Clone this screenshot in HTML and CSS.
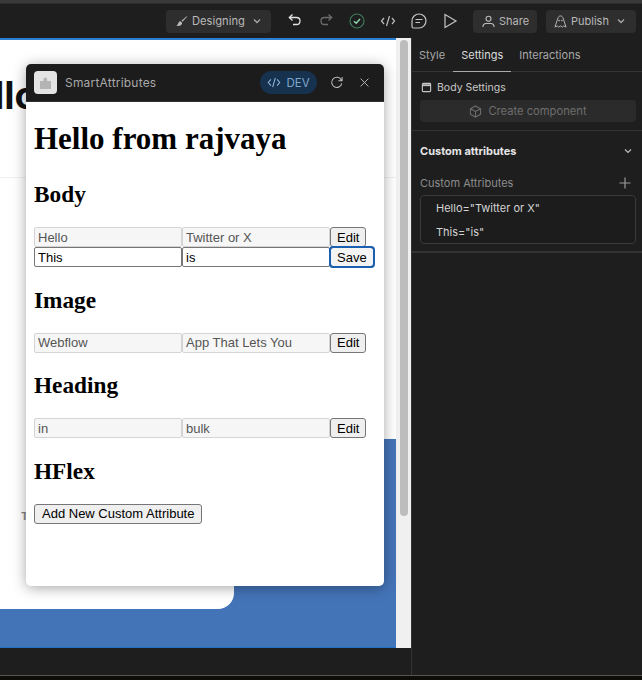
FILE: index.html
```html
<!DOCTYPE html>
<html lang="en">
<head>
<meta charset="utf-8">
<title>SmartAttributes</title>
<link rel="stylesheet" href="styles.css">
</head>
<body>
<div class="app">
  <div class="strip-top"></div>
  <header class="topbar">
    <div class="tb-btn designing">
      <svg class="ic14" viewBox="0 0 14 14" fill="#bdbdbd"><path d="M13 1.200 7 6.200l1 1.200 5-5.600zM5.900 6.800c-1.500.2-2 1.100-2.300 2.200-.3 1-1 1.800-2.200 2.400 2.400.7 4.900.4 6-1.600.3-.6.300-1.100.1-1.500z"/></svg>
      <span>Designing</span>
      <svg class="chev" viewBox="0 0 10 6" fill="none" stroke="#aaa" stroke-width="1.300"><path d="M2 1.500 5 4.500l3-3"/></svg>
    </div>
    <div class="tools">
      <svg class="ic16" viewBox="0 0 16 16" fill="none" stroke="#e2e2e2" stroke-width="1.300"><path d="M5.500 1.500 2.300 4.500l3.200 3M2.500 4.500h7c2 0 3.500 1.400 3.500 3.400s-1.500 3.600-3.500 3.600H6"/></svg>
      <svg class="ic16" viewBox="0 0 16 16" fill="none" stroke="#6c6c6c" stroke-width="1.300"><path d="M10.500 1.500l3.200 3-3.200 3M13.500 4.500h-7c-2 0-3.500 1.400-3.500 3.400s1.500 3.600 3.500 3.600H10"/></svg>
      <svg class="ic16" viewBox="0 0 16 16" fill="none"><circle cx="8" cy="8" r="7" stroke="#3e7a5c" stroke-width="1.200"/><path d="M5 8.200 7.200 10.200 11 6" stroke="#8fdcae" stroke-width="1.400"/></svg>
      <svg class="ic16" viewBox="0 0 16 16" fill="none" stroke="#bcbcbc" stroke-width="1.200"><path d="M4 5 1.500 8 4 11M12 5l2.500 3L12 11M9.500 3 6.500 13"/></svg>
      <svg class="ic16" viewBox="0 0 16 16" fill="none" stroke="#c4c4c4" stroke-width="1.200"><path d="M8 1c3.900 0 7 3 7 6.800S11.900 15 8 15H2.500c-.8 0-1.500-.6-1.500-1.400V8C1 4 4.100 1 8 1z"/><path d="M4.500 6.500h7M4.500 9.500h4.500"/></svg>
      <svg class="ic16" viewBox="0 0 16 16" fill="none" stroke="#c4c4c4" stroke-width="1.200"><path d="M3 1.500v13L14 8z"/></svg>
    </div>
    <div class="tb-btn share">
      <svg class="ic14" viewBox="0 0 14 14" fill="none" stroke="#bdbdbd" stroke-width="1.200"><circle cx="7" cy="4" r="2.700"/><path d="M1 13c0-2.500 1.500-3.800 3.500-3.800h5c2 0 3.500 1.300 3.500 3.800"/></svg>
      <span>Share</span>
    </div>
    <div class="tb-btn publish">
      <svg class="ic14" viewBox="0 0 14 14" fill="none" stroke="#bdbdbd" stroke-width="1"><path d="M1 13 4 4c.6-2 1.700-3 3-3s2.400 1 3 3l3 9-2.500-1.200L9 13l-2-1.200L5 13l-1.500-1.200z"/><circle cx="5.500" cy="6" r=".5"/><circle cx="8.500" cy="6" r=".5"/></svg>
      <span>Publish</span>
      <svg class="chev" viewBox="0 0 10 6" fill="none" stroke="#aaa" stroke-width="1.300"><path d="M2 1.500 5 4.500l3-3"/></svg>
    </div>
  </header>
  <div class="main">
    <div class="left">
      <div class="canvas">
        <div class="page">
          <div class="hero"><div class="hero-title">Hello</div></div>
          <div class="hero-rest"></div>
          <div class="blue">
            <div class="card"><span class="card-t">T</span></div>
          </div>
        </div>
        <div class="scrolltrack"><div class="thumb"></div></div>
        <section class="popup">
          <div class="pop-head">
            <div class="pop-logo">
              <svg viewBox="0 0 14 14" fill="#b4b4b4"><path d="M1 5h3.500V3.200a1.800 1.800 0 0 1 3.600 0V5H12v8H1z"/></svg>
            </div>
            <span class="pop-name">SmartAttributes</span>
            <div class="dev">
              <svg viewBox="0 0 16 12" fill="none" stroke="#8fb8de" stroke-width="1.200"><path d="M4.500 2.500 1.500 6l3 3.500M11.500 2.500l3 3.500-3 3.500M9.500 .8 6.500 11.200"/></svg>
              <span>DEV</span>
            </div>
            <svg class="pop-ic" viewBox="0 0 14 14" fill="none" stroke="#bdbdbd" stroke-width="1.100"><path d="M12.300 4.500A5.500 5.500 0 1 0 12.700 8M13 1v4H9"/></svg>
            <svg class="pop-x" viewBox="0 0 14 14" fill="none" stroke="#bdbdbd" stroke-width="1.200"><path d="M2 2l10 10M12 2 2 12"/></svg>
          </div>
          <div class="pop-body">
            <h1>Hello from rajvaya</h1>
            <h2>Body</h2>
            <div class="row">
              <input class="inp" disabled value="Hello"><input class="inp" disabled value="Twitter or X"><button class="btn">Edit</button>
            </div>
            <div class="row">
              <input class="inp active" value="This"><input class="inp active" value="is"><button class="btn save">Save</button>
            </div>
            <h2>Image</h2>
            <div class="row">
              <input class="inp" disabled value="Webflow"><input class="inp" disabled value="App That Lets You"><button class="btn">Edit</button>
            </div>
            <h2>Heading</h2>
            <div class="row">
              <input class="inp" disabled value="in"><input class="inp" disabled value="bulk"><button class="btn">Edit</button>
            </div>
            <h2>HFlex</h2>
            <button class="btn add">Add New Custom Attribute</button>
          </div>
        </section>
      </div>
      <div class="bottombar"></div>
    </div>
    <aside class="panel">
      <nav class="tabs">
        <span class="tab first">Style</span>
        <span class="tab on">Settings</span>
        <span class="tab">Interactions</span>
      </nav>
      <div class="sec-body">
        <div class="body-set">
          <svg viewBox="0 0 12 12" fill="none" stroke="#c8c8c8" stroke-width="1.200"><rect x="1.500" y="1.500" width="9" height="9" rx="1"/><path d="M1.500 3.500h9" stroke-width="2"/></svg>
          <span>Body Settings</span>
        </div>
        <div class="create">
          <svg viewBox="0 0 14 14" fill="none" stroke="#6e6e6e" stroke-width="1.100"><path d="M7 1 12.500 4v6L7 13 1.500 10V4zM1.500 4 7 7l5.500-3M7 7v6"/></svg>
          <span>Create component</span>
        </div>
      </div>
      <div class="sec-attr">
        <div class="attr-head">
          <b>Custom attributes</b>
          <svg viewBox="0 0 10 6" fill="none" stroke="#bbb" stroke-width="1.200"><path d="M2 1.500 5 4.500l3-3"/></svg>
        </div>
        <div class="attr-label">
          <span>Custom Attributes</span>
          <svg viewBox="0 0 12 12" fill="none" stroke="#9a9a9a" stroke-width="1.200"><path d="M6 .5v11M.5 6h11"/></svg>
        </div>
        <div class="attr-box">
          <div>Hello="Twitter or X"</div>
          <div>This="is"</div>
        </div>
      </div>
    </aside>
  </div>
  <div class="strip-bottom"></div>
</div>
</body>
</html>
```
FILE: styles.css
```css
* { box-sizing: border-box; }
html, body { margin: 0; height: 100%; }
body { background: #1e1e1e; font-family: Inter, "Liberation Sans", sans-serif; overflow: hidden; }
.app { width: 642px; height: 680px; display: flex; flex-direction: column; }
.strip-top { height: 4px; flex: none; background: #3a3a3a; border-bottom: 1px solid #2b2b2b; }
.topbar { height: 34px; flex: none; display: flex; align-items: center; background: #1e1e1e; padding: 0 6px 0 166px; }
.tb-btn { height: 23px; display: flex; align-items: center; background: #2e2e2e; border-radius: 4px; color: #b8b8b8; font-size: 11px; gap: 4px; }
.designing { width: 105px; padding-left: 9px; font-size: 11.200px; }
.share { width: 64px; margin-left: 15px; padding-left: 9px; }
.publish { width: 90px; margin-left: 9px; padding-left: 8px; }
.chev { width: 10px; height: 6px; margin-left: 3px; }
.ic14 { width: 13px; height: 13px; flex: none; }
.ic16 { width: 16px; height: 16px; flex: none; }
.tools { display: flex; gap: 15px; margin-left: 16px; }
.main { flex: 1; display: flex; min-height: 0; }
.left { width: 411px; flex: none; display: flex; flex-direction: column; }
.canvas { position: relative; height: 610px; display: flex; background: #f2f2f2; overflow: hidden; }
.page { width: 396px; flex: none; display: flex; flex-direction: column; border-top: 2px solid #2a7fd0; border-bottom: 1px solid #2272c8; background: #fff; }
.hero { height: 138px; flex: none; border-bottom: 1px solid #f0f0f0; overflow: hidden; }
.hero-title { margin: 32px 0 0 -57px; font-size: 38px; line-height: 46px; font-weight: 700; color: #111; }
.hero-rest { height: 261px; flex: none; background: #fff; }
.blue { flex: 1; background: #4474b8; }
.card { width: 234px; height: 170px; background: #fff; border-radius: 0 0 16px 0; padding: 65px 0 0 21px; }
.card-t { font-size: 11px; font-weight: 700; color: #888; }
.scrolltrack { width: 15px; flex: none; padding: 2px 3px 0 4px; background: #f0f0f0; }
.thumb { height: 476px; border-radius: 4px; background: #bdbdbd; }
.bottombar { flex: 1; background: #1e1e1e; }
.popup { position: absolute; left: 26px; top: 26px; width: 358px; height: 522px; background: #fff; border-radius: 5px; box-shadow: 0 2px 14px rgba(0,0,0,.35); overflow: hidden; }
.pop-head { height: 38px; display: flex; align-items: center; background: #1c1c1c; padding-left: 8px; border-bottom: 1px solid #333; }
.pop-logo { width: 23px; height: 23px; display: flex; align-items: center; justify-content: center; background: #e4e4e4; border-radius: 4px; }
.pop-logo svg { width: 14px; height: 14px; }
.pop-name { margin-left: 8px; font-size: 12px; color: #a9a9a9; letter-spacing: .2px; }
.dev { width: 57px; height: 23px; margin-left: auto; display: flex; align-items: center; justify-content: center; gap: 5px; background: #16324f; border-radius: 12px; color: #7ea6cc; font-size: 11.500px; }
.dev svg { width: 14px; height: 11px; }
.pop-ic { width: 13px; height: 13px; margin-left: 13px; }
.pop-x { width: 11px; height: 11px; margin: 0 14px 0 16px; }
.pop-body { padding: 0 8px; color: #000; font-family: "Liberation Serif", serif; }
h1 { margin: 19px 0 24px; font-size: 31px; line-height: 36px; font-weight: 700; }
h2 { margin: 19.500px 0; font-size: 23.300px; line-height: 26.500px; font-weight: 700; }
.row { display: flex; height: 20px; }
.inp { width: 148px; height: 20px; padding: 1px 3px; font: 13px "Liberation Sans", Arial, sans-serif; color: #555; background: #f6f6f6; border: 1px solid #d4d4d4; border-radius: 2px; opacity: 1; -webkit-text-fill-color: #555; }
.active { color: #000; -webkit-text-fill-color: #000; background: #fff; border-color: #767676; }
.btn { height: 20px; padding: 0 6px; font: 13px "Liberation Sans", Arial, sans-serif; color: #000; background: #efefef; border: 1px solid #767676; border-radius: 3px; }
.save { background: #f4f4f4; outline: 2px solid #1a5fb0; outline-offset: -1px; }
.add { display: block; padding: 0 7px; }
.panel { flex: 1; min-width: 0; background: #1e1e1e; border-left: 1px solid #333; }
.tabs { height: 34px; display: flex; border-bottom: 1px solid #333; color: #a8a8a8; font-size: 11px; }
.tab { padding: 1px 8px 0; line-height: 33px; }
.first { margin-left: -1px; }
.tab.on { color: #dcdcdc; border-bottom: 1px solid #aaa; height: 34px; }
.sec-body { height: 59px; padding: 7px 6px 0 8px; border-bottom: 1px solid #333; }
.body-set { height: 16px; display: flex; align-items: center; gap: 5px; color: #c8c8c8; font-size: 10.500px; padding-left: 1px; }
.body-set svg { width: 11px; height: 11px; }
.create { height: 22px; margin-top: 5px; display: flex; align-items: center; justify-content: center; gap: 6px; background: #2b2b2b; border-radius: 4px; color: #6e6e6e; font-size: 11.200px; }
.create svg { width: 13px; height: 13px; }
.sec-attr { height: 122px; padding: 12px 6px 0 8px; border-bottom: 2px solid #333; }
.attr-head { display: flex; align-items: center; justify-content: space-between; height: 16px; color: #e6e6e6; font-size: 11px; padding-right: 3px; }
.attr-head svg { width: 10px; height: 6px; }
.attr-label { display: flex; align-items: center; justify-content: space-between; margin-top: 16px; height: 16px; color: #8c8c8c; font-size: 11px; }
.attr-label svg { width: 12px; height: 12px; margin-right: 5px; }
.attr-box { height: 49px; margin-top: 4px; padding: 0 0 0 15px; background: #1c1c1c; border: 1px solid #3a3a3a; border-radius: 4px; color: #d4d4d4; font-size: 11px; line-height: 24px; }
.strip-bottom { height: 5px; flex: none; background: #0d0c06; border-top: 1px solid #555; }
```
